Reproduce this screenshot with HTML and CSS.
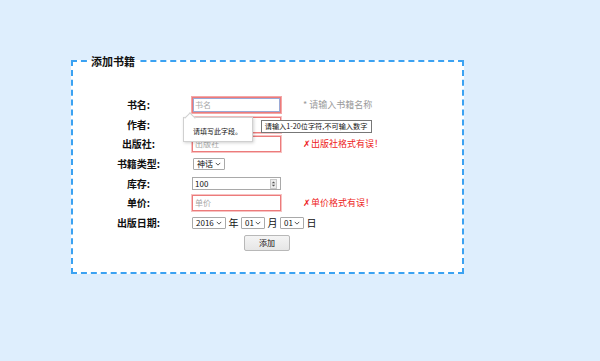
FILE: index.html
```html
<!DOCTYPE html>
<html lang="zh">
<head>
<meta charset="utf-8">
<title>添加书籍</title>
<link rel="stylesheet" href="styles.css">
</head>
<body>
<fieldset class="box">
  <legend class="box-title">添加书籍</legend>
  <div class="form">
    <div class="label">书名:</div>
    <div class="field"><div class="input invalid focus"><span class="ph">书名</span></div></div>
    <div class="note hint">* 请输入书籍名称</div>

    <div class="label">作者:</div>
    <div class="field"><div class="input invalid"></div></div>
    <div class="note"></div>

    <div class="label">出版社:</div>
    <div class="field"><div class="input invalid"><span class="ph">出版社</span></div></div>
    <div class="note err">✗出版社格式有误！</div>

    <div class="label">书籍类型:</div>
    <div class="field"><div class="select sel-genre"><span>神话</span><svg class="chev" viewBox="0 0 8 5" width="6" height="4"><path d="M1 1 L4 4 L7 1" fill="none" stroke="#333" stroke-width="1.1"/></svg></div></div>
    <div class="note"></div>

    <div class="label">库存:</div>
    <div class="field"><div class="input number"><span class="val">100</span><span class="spin"><svg viewBox="0 0 7 10" width="7" height="10"><path d="M3.5 1.5 L6 4 L1 4 Z" fill="#555"/><path d="M3.5 8.5 L6 6 L1 6 Z" fill="#555"/></svg></span></div></div>
    <div class="note"></div>

    <div class="label">单价:</div>
    <div class="field"><div class="input invalid"><span class="ph">单价</span></div></div>
    <div class="note err">✗单价格式有误！</div>

    <div class="label">出版日期:</div>
    <div class="field date">
      <div class="select sel-year"><span>2016</span><svg class="chev" viewBox="0 0 8 5" width="6" height="4"><path d="M1 1 L4 4 L7 1" fill="none" stroke="#333" stroke-width="1.1"/></svg></div>
      <span class="unit">年</span>
      <div class="select sel-small"><span>01</span><svg class="chev" viewBox="0 0 8 5" width="6" height="4"><path d="M1 1 L4 4 L7 1" fill="none" stroke="#333" stroke-width="1.1"/></svg></div>
      <span class="unit">月</span>
      <div class="select sel-small"><span>01</span><svg class="chev" viewBox="0 0 8 5" width="6" height="4"><path d="M1 1 L4 4 L7 1" fill="none" stroke="#333" stroke-width="1.1"/></svg></div>
      <span class="unit">日</span>
    </div>

    <div class="label"></div>
    <div class="actions"><button class="btn" type="button">添加</button></div>

    <div class="bubble"><span class="bubble-arrow"></span>请填写此字段。</div>
    <div class="tip">请输入1-20位字符,不可输入数字</div>
  </div>
</fieldset>
</body>
</html>
```
FILE: styles.css
```css
html, body {
  margin: 0;
  padding: 0;
}
body {
  background: #deeefd;
  width: 600px;
  height: 361px;
  overflow: hidden;
  padding-top: 54px;
  box-sizing: border-box;
  font-family: "Noto Sans CJK SC", "Noto Sans", sans-serif;
  color: #111;
}
.box {
  margin: 0 0 0 71px;
  width: 393px;
  height: 220px;
  box-sizing: border-box;
  border: 2px dashed #3ba2f2;
  background: #fff;
  padding: 0;
  min-inline-size: 0;
}
.box-title {
  margin-left: 16px;
  padding: 0 2px;
  font-size: 11px;
  line-height: 14px;
  font-weight: bold;
  color: #111;
}
.form {
  position: relative;
  margin: 27px 0 0 34px;
  display: grid;
  grid-template-columns: 63px 89px auto;
  grid-auto-rows: 19.7px;
  column-gap: 22px;
  align-items: center;
}
.label {
  text-align: center;
  font-size: 10px;
  line-height: 12px;
  font-weight: bold;
  color: #111;
}
.field {
  display: flex;
  align-items: center;
}
.input {
  box-sizing: border-box;
  width: 89px;
  height: 16px;
  border: 1px solid #a9a9a9;
  background: #fff;
  display: flex;
  align-items: center;
  padding: 0 2px;
  font-size: 8px;
  line-height: 10px;
}
.input.invalid {
  border: 1px solid #ec7b7b;
  box-shadow: 0 0 0 1px #f7c2c2;
}
.input.focus {
  box-shadow: 0 0 0 1px #f4a7a7, inset 0 0 0 1px #9aa9d6;
}
.ph {
  color: #a8a8a8;
}
.input.number {
  height: 13px;
  justify-content: space-between;
  padding: 0 3px 0 2px;
  color: #111;
}
.spin {
  display: flex;
  width: 7px;
  height: 10px;
  background: #ececec;
  border: 1px solid #c9c9c9;
  box-sizing: border-box;
  align-items: center;
  justify-content: center;
}
.spin svg {
  display: block;
  width: 5px;
  height: 8px;
}
.note {
  font-size: 9px;
  line-height: 12px;
  white-space: nowrap;
}
.hint {
  color: #9a9a9a;
}
.err {
  color: #ee2222;
}
.select {
  box-sizing: border-box;
  height: 12px;
  border: 1px solid #a9a9a9;
  border-radius: 1px;
  background: #fff;
  display: flex;
  align-items: center;
  justify-content: space-between;
  padding: 0 3px 0 3px;
  font-size: 8px;
  line-height: 10px;
  color: #111;
}
.chev {
  display: block;
  flex: none;
}
.sel-genre {
  width: 32px;
  height: 12px;
  margin-left: 1px;
}
.sel-year {
  width: 34px;
}
.sel-small {
  width: 24px;
}
.date {
  grid-column: 2 / 4;
  gap: 2.5px;
}
.unit {
  font-size: 10px;
  line-height: 12px;
  color: #111;
}
.actions {
  grid-column: 2 / 4;
  display: flex;
  align-items: center;
}
.btn {
  margin: 0 0 0 52px;
  width: 46px;
  height: 16px;
  padding: 0;
  border: 1px solid #b8b8b8;
  border-radius: 2px;
  background: linear-gradient(#f4f4f4, #e6e6e6);
  font-family: inherit;
  font-size: 8px;
  line-height: 10px;
  color: #111;
}
.bubble {
  position: absolute;
  left: 76px;
  top: 22.3px;
  width: 70px;
  height: 25px;
  box-sizing: border-box;
  background: #fff;
  border: 1px solid #d0d0d0;
  box-shadow: 1px 1px 3px rgba(0,0,0,0.18);
  font-size: 7px;
  line-height: 8px;
  padding: 9px 0 0 9px;
  color: #111;
  white-space: nowrap;
}
.bubble-arrow {
  position: absolute;
  left: 2px;
  top: -4px;
  width: 7px;
  height: 7px;
  background: #fff;
  border-left: 1px solid #d0d0d0;
  border-top: 1px solid #d0d0d0;
  transform: rotate(45deg);
}
.tip {
  position: absolute;
  left: 153.7px;
  top: 25.3px;
  width: 111.6px;
  height: 12.3px;
  box-sizing: border-box;
  background: #fff;
  border: 1px solid #777;
  font-size: 7.2px;
  line-height: 10px;
  padding: 0 0 0 3px;
  color: #111;
  white-space: nowrap;
}
```
